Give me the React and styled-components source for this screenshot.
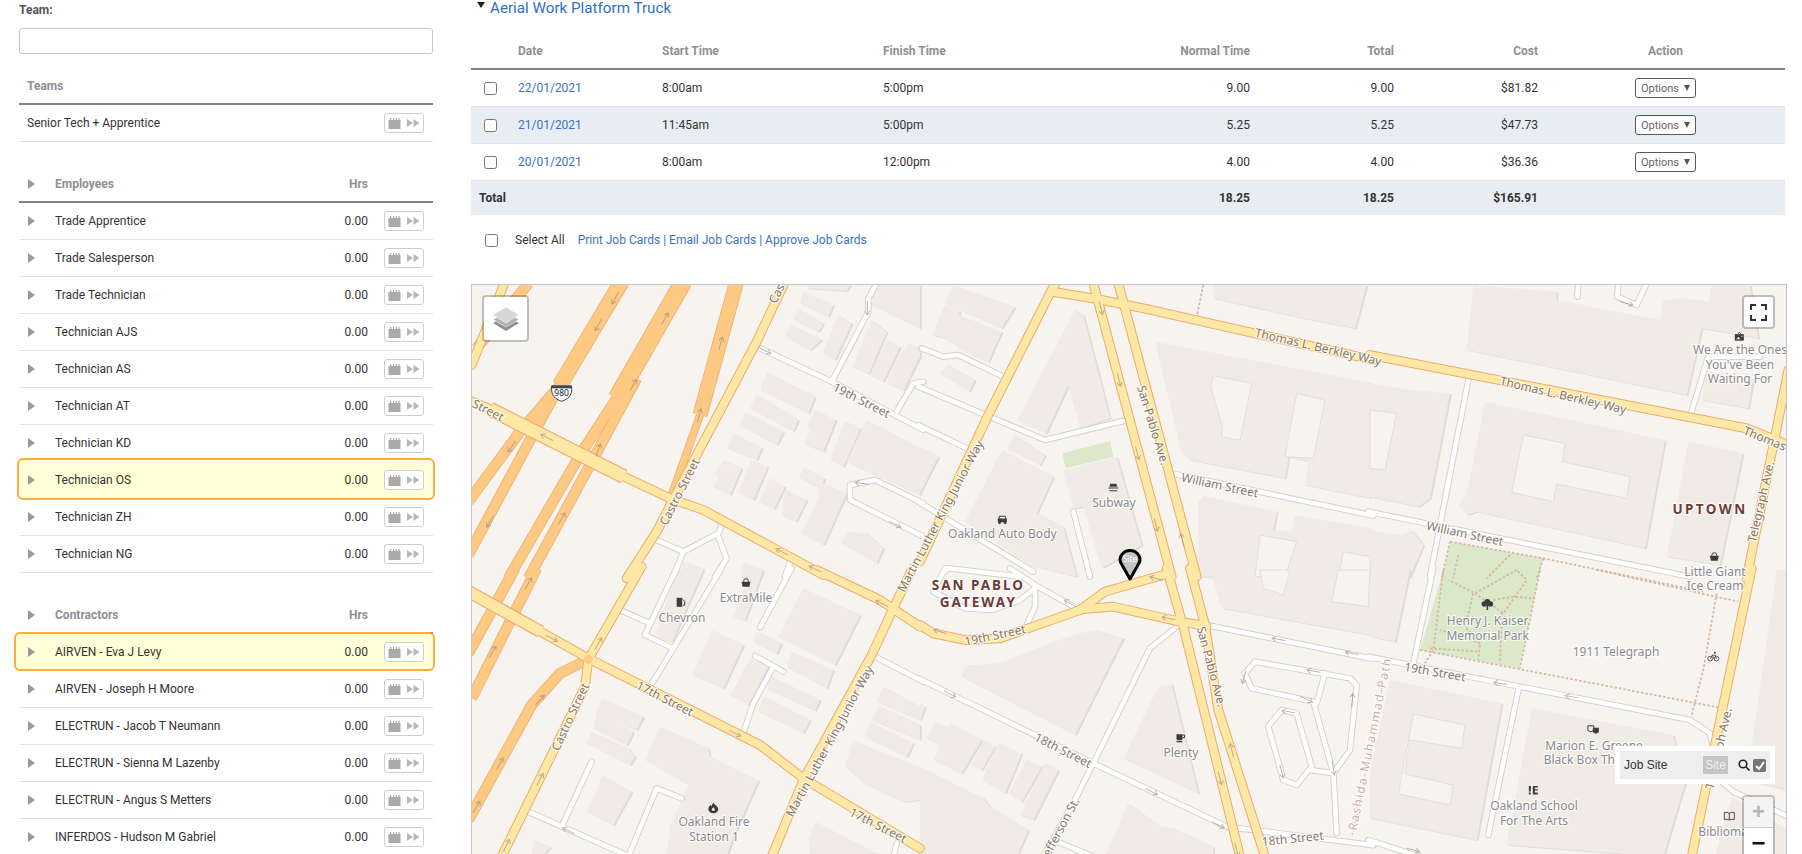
import React from 'react';
import styled, { createGlobalStyle } from 'styled-components';

const Global = createGlobalStyle`
  html, body { margin: 0; padding: 0; height: 854px; overflow: hidden; background: #fff; }
  body { font-family: Roboto, "Liberation Sans", sans-serif; font-size: 12px; color: #333; }
`;

const Page = styled.div`display: flex; height: 854px; overflow: hidden;`;
const Sidebar = styled.aside`width: 414px; margin-left: 19px; flex: none;`;
const FieldLabel = styled.label`display: block; height: 20px; line-height: 20px; font-weight: 700; color: #555; margin-bottom: 8px;`;
const TeamInput = styled.input`display: block; box-sizing: border-box; width: 414px; height: 26px; border: 1px solid #c6c6c6; border-radius: 3px; background: #fff;`;
const Section = styled.section`margin-top: ${p => p.$first ? 13 : 23}px;`;
const SectionHead = styled.div`
  display: grid; grid-template-columns: ${p => p.$plain ? '1fr' : '27px 1fr auto'};
  align-items: center; box-sizing: content-box; height: 34px; padding: 2px 65px 0 ${p => p.$plain ? 8 : 9}px;
  border-bottom: 2px solid #808488; font-weight: 700; color: #8d9094;
`;
const Row = styled.div`
  position: relative; z-index: ${p => p.$mark ? 1 : 'auto'};
  display: grid; grid-template-columns: ${p => p.$plain ? '1fr 40px' : '27px 1fr auto 40px'};
  column-gap: 0; align-items: center; box-sizing: border-box; height: 37px;
  padding: 0 9px 0 ${p => p.$plain ? 8 : 9}px; border-bottom: 1px solid #e2e3e4;
  ${p => p.$mark && `&::before {
    content: ""; position: absolute; box-sizing: border-box;
    top: ${p.$mark === 'wide' ? -2 : -4}px; bottom: ${p.$mark === 'wide' ? -1 : -2}px;
    left: ${p.$mark === 'wide' ? -5 : -2}px; right: -2px;
    background: #ffffd8; border: 2px solid #fbae40; border-radius: 6px;
  }
  & > * { position: relative; }`}
`;
const Name = styled.span`white-space: nowrap;`;
const Hours = styled.span`margin-right: 16px; text-align: right;`;
const CaretIcon = styled.svg`display: block; width: 7px; height: 10px; fill: #9a9a9a;`;
const AssignButton = styled.button`
  display: flex; align-items: center; justify-content: center; box-sizing: border-box; width: 40px; height: 20px;
  padding: 0; background: #fff; border: 1px solid #cfcfcf; border-radius: 3px;
`;
const Caret = () => <CaretIcon viewBox="0 0 7 10"><path d="M0 0 L7 5 L0 10 Z" /></CaretIcon>;
const AssignIcon = () => (
  <svg width="32" height="12" viewBox="0 0 32 12" fill="#aaa">
    <path d="M0.5 3 H12.5 V12 H0.5 Z M2 1 h1.2 v2.5 H2 Z M5 1 h1.2 v2.5 H5 Z M7.8 1 h1.2 v2.5 H7.8 Z M10.4 1 h1.2 v2.5 h-1.2 Z" />
    <path d="M19 2 L25 6 L19 10 Z M25.5 2 L31.5 6 L25.5 10 Z" opacity=".85" />
  </svg>
);

const Person = ({ name, mark }) => (
  <Row $mark={mark}>
    <Caret />
    <Name>{name}</Name>
    <Hours>0.00</Hours>
    <AssignButton><AssignIcon /></AssignButton>
  </Row>
);

const Main = styled.main`width: 1316px; margin-left: 38px; flex: none;`;
const Title = styled.h2`
  display: flex; align-items: flex-start; gap: 5px; box-sizing: border-box; height: 34px; margin: 0 0 0 6px; padding-top: 1px; font-size: 15.2px; font-weight: 400; line-height: 15px; color: #2f6fc7;
`;
const DownCaret = styled.i`
  display: block; width: 0; height: 0; margin-top: 1px; border-left: 4px solid transparent; border-right: 4px solid transparent; border-top: 6px solid #222;
`;
const Cols = `grid-template-columns: 47px 144px 221px 223px 144px 144px 144px 1fr;`;
const HeadRow = styled.div`
  display: grid; ${Cols} align-items: center; width: 1314px; height: 34px; border-bottom: 2px solid #808488; font-weight: 700; color: #8d9094;
`;
const DataRow = styled.div`
  display: grid; ${Cols} align-items: center; box-sizing: border-box; width: 1314px; height: 37px;
  border-bottom: 1px solid #e2e3e4; background: ${p => p.$alt ? '#e8edf4' : '#fff'};
`;
const TotalRow = styled.div`
  display: grid; ${Cols} align-items: center; width: 1314px; height: 34px; background: #e8edf4; font-weight: 700; color: #333;
`;
const Right = styled.span`text-align: right;`;
const Center = styled.span`display: flex; justify-content: center; padding-left: 8px;`;
const Check = styled.input.attrs({ type: 'checkbox' })`margin: 0 0 0 13px; width: 13px; height: 13px;`;
const TotalLabel = styled.span`padding-left: 8px;`;
const TextLink = styled.a`color: #3b70c4; text-decoration: none;`;
const OptionsButton = styled.button`
  display: flex; align-items: center; gap: 5px; box-sizing: border-box; width: 61px; height: 20px; padding: 0 0 0 5px;
  background: #fff; border: 1px solid #55595e; border-radius: 3px; font: 400 11px Roboto, sans-serif; color: #666;
`;
const OptionsCaret = styled.i`width: 0; height: 0; border-left: 3px solid transparent; border-right: 3px solid transparent; border-top: 6px solid #555;`;
const Footer = styled.div`display: flex; align-items: center; height: 50px; margin-top: 0; padding-left: 14px;`;
const FooterCheck = styled.input.attrs({ type: 'checkbox' })`margin: 0 17px 0 0; width: 13px; height: 13px;`;
const SelectLabel = styled.span`margin-right: 13px;`;
const Sep = styled.span`color: #3b70c4;`;

const MapBox = styled.div`
  position: relative; box-sizing: border-box; width: 1316px; height: 572px; margin-top: 19px;
  border: 1px solid #c4c4c4; border-bottom: 0; overflow: hidden; background: #f7f4f0;
`;
const MapSvg = styled.svg`display: block; width: 1314px; height: 571px;`;
const Label = styled.text`
  font-family: "Noto Sans", "Open Sans", sans-serif; font-size: ${p => p.$size || 12}px;
  font-weight: ${p => p.$weight || 400}; letter-spacing: ${p => p.$track || 0}px; fill: ${p => p.$color || '#8a8a8e'};
  text-anchor: ${p => p.$anchor || 'middle'}; dominant-baseline: central;
  paint-order: stroke; stroke: rgba(255,255,255,.75); stroke-width: 2.4px; stroke-linejoin: round;
`;
const ControlTile = styled.div`
  position: absolute; box-sizing: border-box; display: flex; align-items: center; justify-content: center;
  background: #fff; border: 2px solid rgba(0,0,0,.22); border-radius: 4px; background-clip: padding-box;
`;
const LayersTile = styled(ControlTile)`left: 10px; top: 10px; width: 47px; height: 47px;`;
const FullTile = styled(ControlTile)`right: 11px; top: 10px; width: 33px; height: 34px;`;
const ZoomTile = styled(ControlTile)`right: 11px; top: 510px; width: 33px; height: 70px; flex-direction: column; justify-content: flex-start; overflow: hidden;`;
const ZoomIn = styled.div`display: flex; align-items: center; justify-content: center; width: 100%; height: 30px; background: #f4f4f4; color: #b5b5b5; border-bottom: 1px solid #ccc; font: 700 22px "Liberation Sans", sans-serif;`;
const ZoomOut = styled.div`display: flex; align-items: center; justify-content: center; width: 100%; height: 30px; color: #111; font: 700 24px "Liberation Sans", sans-serif;`;
const LegendBox = styled.div`
  position: absolute; right: 11px; top: 461px; box-sizing: border-box; width: 160px; height: 38px; padding: 5px; background: #fff;
`;
const LegendInner = styled.div`
  display: flex; align-items: center; height: 28px; padding-left: 4px; background: #eee; font: 12px "Liberation Sans", sans-serif; color: #333;
`;
const LegendName = styled.span`width: 79px;`;
const LegendBadge = styled.span`
  display: block; width: 25px; height: 18px; line-height: 18px; text-align: center; background: #c4c4c4; color: #f0f0f0; margin-right: 10px;
`;
const LegendCheck = styled.span`
  display: flex; align-items: center; justify-content: center; width: 13px; height: 13px; margin-left: 3px; background: #757575; border-radius: 2px;
`;

const O = { a: [470, 285], b: [470, 570], c: [920, 285], d: [920, 570], e: [1370, 285], f: [1370, 570] };
const pt = (p, x, y) => [O[p][0] + x / 3, O[p][1] + y / 3];
const pts = (p, s) => s.trim().split(/\s+/).map(t => { const [x, y] = t.split(',').map(Number); return pt(p, x, y).join(','); }).join(' ');

const buildings = {
  a: ['890,262 1035,335 1015,385 870,315', '860,328 985,405 970,438 840,370', '825,382 940,440 920,480 808,420', '790,445 875,490 860,525 772,490', '845,525 893,545 850,645 805,622', '760,525 815,550 780,630 730,605 745,575 735,565', '900,580 945,605 912,672 868,650', '945,615 1010,645 978,710 935,690', '1000,547 1065,580 1050,612 985,575', '1055,595 1130,625 1060,780 995,745 1050,630 1040,625', '1035,375 1097,405 1060,500 1005,478 1020,435 1012,425', '1125,408 1172,430 1120,545 1080,525', '1190,405 1350,490 1350,630 1215,570 1130,530', '985,72 1060,115 1045,140 970,105', '1000,20 1090,60 1075,95 990,55', '1015,0 1140,0 1130,18 1010,10', '960,118 1055,165 1020,195 945,155', '1105,90 1145,115 1095,225 1058,205', '1205,105 1250,140 1195,268 1148,245', '1250,165 1290,185 1240,290 1200,270', '1320,175 1350,190 1350,215 1300,315 1250,295 1280,220', '1210,0 1350,0 1350,130 1205,60', '1130,740 1190,745 1240,790 1220,835 1115,775', '820,830 880,855 870,875 810,875', '640,830 700,850 690,875 630,875'],
  b: ['1000,55 1170,135 1095,285 925,200', '725,180 820,225 760,355 668,315', '840,265 895,290 835,405 782,375', '860,185 935,220 920,252 850,215', '965,245 1090,300 1070,355 950,290', '905,320 1050,390 1035,422 890,355', '880,378 1020,450 1000,488 865,425', '395,385 520,440 500,480 375,430', '380,430 490,485 470,525 370,475', '365,485 475,535 495,560 480,585 350,520', '570,470 715,535 720,560 865,632 790,800 770,860 590,860 600,770 655,645 525,570', '395,615 485,665 430,765 350,725 380,660', '790,140 840,0 880,0 825,150', '555,200 620,0 700,0 605,215', '1240,350 1350,410 1350,450 1220,395', '1225,405 1350,465 1350,510 1205,450', '1200,455 1330,520 1310,560 1185,500', '1150,510 1215,540 1350,590 1350,690 1300,695 1180,640 1125,590', '1035,755 1220,850 1020,860 1015,810', '190,810 240,830 220,860 185,860'],
  c: ['100,0 285,65 245,130 75,55', '75,60 120,80 115,90 205,125 245,140 205,230 165,215 120,190 75,160 35,150', '465,75 490,90 570,400 480,430 445,300 378,445 292,405', '60,265 85,240 165,285 148,320', '285,450 375,510 360,540 260,490', '245,495 400,575 350,685 430,725 470,875 330,840 135,710', '430,555 590,515 665,780 545,850 490,665 460,670', '0,485 55,515 0,625', '880,0 1340,0 1305,130 1150,100 880,40', '705,170 1350,292 1350,640 1155,600 1165,530 1105,515 1095,580 810,525 785,505', '835,650 850,632 1070,680 1060,735 1115,740 1125,690 1350,730 1350,875 835,875'],
  d: ['870,0 1350,0 1350,195 905,115', '125,320 135,285 170,285 250,275 400,215 480,190 530,180 610,205 465,495', '715,350 755,342 835,670 610,565', '45,455 85,470 60,525 20,505', '90,460 185,510 125,610 40,570', '190,510 225,530 185,600 155,585', '235,520 305,550 255,670 185,630', '320,570 365,590 305,695 265,670', '375,580 415,600 340,750 300,735', '0,590 190,685 210,710 325,780 290,860 0,860', '0,400 15,410 0,450', '625,700 720,770 760,775 880,830 880,860 555,860'],
  e: ['310,0 560,20 560,45 870,105 880,45 945,40 1015,50 1025,0 1140,0 1165,160 995,130 950,330 290,195', '0,295 125,315 240,325 180,640 145,665 0,635', '345,350 885,465 825,790 320,680 290,690 265,660 290,630', '955,470 1118,505 1050,840 890,815', '1010,260 1150,280 1135,370 995,345', '0,735 90,750 125,735 160,780 120,875 0,875'],
  f: ['0,0 120,0 75,215 0,200', '60,330 395,400 320,810 0,745 0,600', '485,415 910,495 945,640 880,860 410,825', '1220,0 1250,0 1250,660 1130,630', '1085,680 1250,780 1250,860 1035,860'],
};
const courts = {
  c: ['880,272 995,295 960,465 905,455 908,430 872,305', '1130,325 1215,345 1180,520 1095,515', '1020,750 1130,770 1095,875 1005,875', '1270,800 1350,815 1350,875 1255,875'],
  d: ['1020,0 1110,0 1090,75 1030,55', '1255,0 1350,0 1345,110 1235,95'],
  e: ['0,375 80,385 45,555 0,550', '460,450 585,475 578,530 780,575 770,640 560,597 550,650 425,622'],
  f: ['130,432 285,465 275,535 120,510 105,612 250,645 240,705 85,672'],
};
const whiteRoads = [
  ['a', '860,185 1085,290 1360,435'], ['a', '1085,290 1195,80 1195,40 1220,-5'], ['a', '1360,290 1330,295 1280,380'],
  ['a', '1140,600 1215,585 1360,655'], ['a', '1140,600 1140,645 1360,755'], ['a', '560,765 640,800 745,745 755,720'],
  ['a', '640,800 610,875'], ['a', '745,755 770,820 735,875'], ['a', '960,830 945,875'],
  ['b', '620,-5 525,195 610,235 755,-5'], ['b', '610,235 540,350'], ['b', '450,120 540,160'], ['b', '965,-5 870,172'],
  ['b', '855,258 940,305'], ['b', '910,290 850,400 820,490'], ['b', '1215,260 1360,335'], ['b', '365,575 275,770'],
  ['b', '175,725 480,860'], ['b', '635,685 560,655 475,860'], ['b', '1280,820 1270,860'],
  ['c', '5,190 70,215 115,210 250,275'], ['c', '-5,305 375,465 610,408'], ['c', '-5,420 140,490'], ['c', '-5,650 340,860'],
  ['c', '460,680 510,875'], ['c', '75,860 85,850 300,875'], ['c', '755,565 1360,692'],
  ['d', '75,-5 40,65 135,115 215,120 300,90 345,55'], ['d', '270,-5 345,45 345,110 320,165'], ['d', '345,45 470,115'],
  ['d', '-5,325 520,580 920,770 1360,826'], ['d', '770,170 690,235 520,580 460,700 370,860'], ['d', '860,165 1360,267'], ['d', '400,810 520,860'],
  ['d', '975,310 1005,275 1290,325 1310,345 1290,540 1240,610 1170,600'], ['d', '975,310 995,355 1180,395 1240,610 1250,790'], ['d', '1215,310 1190,400'],
  ['d', '1060,450 1085,420 1130,430 1175,590 1130,645 1090,630 1045,470 1060,450'],
  ['e', '295,285 180,875'], ['e', '-5,680 960,875'], ['e', '1170,215 1015,215 960,395'], ['e', '625,-5 622,35'], ['e', '745,-5 742,35 800,60 830,-5'],
  ['f', '190,-5 130,280'], ['f', '445,360 355,795'], ['f', '-5,810 150,860'], ['f', '-5,260 450,350 960,450 1020,490 1030,530'], ['f', '1060,640 1090,665 1255,740'],
];
const motorways = [
  ['a', '455,-10 270,300', 16], ['a', '270,300 150,440 -5,650', 11], ['a', '270,300 215,400 -5,810', 11],
  ['a', '640,-10 440,340', 18], ['a', '440,340 330,510 115,880', 11], ['a', '500,280 360,540 175,880', 11],
  ['a', '800,-10 690,390', 15], ['a', '690,390 605,630', 8], ['a', '175,-5 20,190', 11],
  ['b', '135,-5 50,150 -5,250', 11], ['b', '200,-5 5,385', 11], ['b', '355,268 270,310 185,405 -5,750', 11],
];
const yellow = [
  ['a', '-5,345 60,372', 9.8], ['a', '462,575 600,640 700,675 1060,870', 9.8], ['a', '945,-10 860,170 680,510 560,740 470,880', 9.8], ['a', '105,-10 5,240', 9.8],
  ['b', '212,185 360,268 870,525 1000,625 1350,835', 9.8], ['b', '515,-10 355,268 345,350 95,860', 9.8], ['b', '1325,0 1270,115 1205,255 1000,630 905,860', 9.8], ['b', '1040,0 1230,90 1350,170', 9.8],
  ['c', '410,-10 395,15 200,400 0,830', 9.8], ['c', '395,20 520,40 680,72 1360,225', 9.8], ['c', '520,-5 755,875', 9.8], ['c', '595,-5 830,875', 9.8],
  ['d', '0,165 40,190 135,210 240,205 480,120', 9.8], ['d', '480,120 555,65 745,10', 9.8], ['d', '480,118 580,110 780,155 860,168', 9.8],
  ['d', '740,-5 790,170 960,860', 9.8], ['d', '810,-5 855,165 895,420 1035,860', 9.8],
  ['e', '0,210 1130,430 1255,480', 9.8], ['e', '1255,255 1130,880', 9.8], ['f', '1145,-5 965,860', 9.8],
];
const thick = [['a', '60,372 462,575', 15], ['b', '-5,64 212,185', 13]];
const dotted = [
  ['e', '240,770 520,820 1000,920'], ['e', '240,770 215,880'], ['e', '520,820 500,880'], ['e', '265,810 250,880'], ['e', '420,810 350,880'],
  ['f', '220,0 190,240 165,280'], ['f', '510,0 450,295'], ['f', '150,240 1045,412'], ['f', '680,0 1105,95'], ['f', '1040,70 1000,300 965,435'],
  ['f', '440,0 315,70 235,30'], ['f', '315,70 400,130 470,30 440,0'], ['f', '370,90 430,80 495,85'], ['f', '330,220 210,180'], ['f', '310,70 285,170 330,220 325,270'], ['f', '395,130 390,280'], ['f', '180,235 330,245'],
  ['c', '850,0 830,95'],
];
const arrows = [
  ['a', 435, 40, 120], ['a', 385, 120, 120], ['a', 585, 100, -60], ['a', 490, 300, -60], ['a', 752, 175, -75], ['a', 688, 390, -75], ['a', 385, 495, -70], ['a', 275, 700, -60], ['a', 125, 485, 125], ['a', 60, 710, 120], ['a', 230, 457, 207], ['a', 935, 800, 207], ['a', 1035, 852, 207], ['a', 1275, 718, 27], ['a', 1175, 595, 187], ['a', 885, 197, 27], ['a', 1192, 70, 90],
  ['b', 175, 40, -60], ['b', 68, 245, -60], ['b', 245, 205, 27], ['b', 385, 220, -60], ['b', 210, 390, -50], ['b', 90, 580, -60], ['b', 20, 710, -60], ['b', 210, 628, -62], ['b', 110, 825, -62], ['b', 795, 490, 27], ['b', 1235, 100, 207], ['b', 295, 782, 207],
  ['c', 543, 70, 75], ['c', 597, 285, 75], ['c', 652, 505, 75], ['c', 708, 720, 75], ['c', 787, 765, -105],
  ['d', 60, 185, 195], ['d', 450, 100, 210], ['d', 745, 145, 190], ['d', 708, 25, 195], ['d', 1075, 208, 190], ['d', 1295, 250, 190], ['d', 90, 372, 27], ['d', 695, 665, 27], ['d', 895, 765, 27], ['d', 935, 540, -105], ['d', 900, 625, 75], ['d', 950, 840, 75], ['d', 1180, 303, 190], ['d', 1085, 605, 75], ['d', 1297, 390, -85], ['d', 1160, 388, 25], ['d', 972, 322, 105], ['d', 1105, 425, 190], ['d', 1240, 595, 80],
  ['e', 770, 55, 15],
  ['f', 390, 340, 190], ['f', 605, 380, 190], ['f', 130, 840, 15],
];
const streets = [
  ['a', 55, 375, 27, 'Street'], ['a', 628, 620, -63, 'Castro Street'], ['a', 1175, 345, 27, '19th Street'],
  ['b', 300, 440, -65, 'Castro Street'], ['b', 585, 385, 27, '17th Street'], ['b', 1225, 765, 27, '17th Street'],
  ['c', 60, 693, -62, 'Martin Luther King Junior Way'], ['b', 1078, 513, -61.5, 'Martin Luther King Junior Way'],
  ['c', 700, 420, 73, 'San Pablo Ave.'], ['d', 875, 290, 75, 'San Pablo Ave.'], ['c', 1195, 185, 13, 'Thomas L. Berkley Way'],
  ['e', 580, 330, 13, 'Thomas L. Berkley Way'], ['c', 900, 600, 12, 'William Street'], ['e', 285, 745, 12, 'William Street'],
  ['d', 225, 195, -12, '19th Street'], ['f', 195, 305, 10, '19th Street'], ['d', 430, 540, 27, '18th Street'], ['d', 1118, 805, -6, '18th Street'],
  ['d', 420, 775, -62, 'Jefferson St.'], ['e', 1172, 650, -77, 'Telegraph Ave.'], ['f', 1045, 535, -77, 'Telegraph Ave.'], ['e', 1185, 460, 22, 'Thomas'],
];
const pois = [
  ['e', 1110, 194, 'We Are the Ones'], ['e', 1110, 237, "You've Been"], ['e', 1110, 280, 'Waiting For'],
  ['c', 582, 653, 'Subway'], ['c', 247, 746, 'Oakland Auto Body'], ['b', 828, 83, 'ExtraMile'], ['b', 636, 143, 'Chevron'],
  ['b', 732, 755, 'Oakland Fire'], ['b', 732, 798, 'Station 1'], ['d', 783, 548, 'Plenty'], ['f', 1035, 5, 'Little Giant'], ['f', 1035, 47, 'Ice Cream'],
  ['f', 353, 152, 'Henry J. Kaiser'], ['f', 353, 195, 'Memorial Park'], ['f', 738, 245, '1911 Telegraph'], ['f', 672, 525, 'Marion E. Greene'], ['f', 672, 567, 'Black Box Theatre'],
  ['f', 492, 707, 'Oakland School'], ['f', 492, 750, 'For The Arts'], ['f', 985, 785, 'Bibliomania'],
];
const glyphs = {
  basket: <><path d="M-4.5 -1 H4.5 L3.4 4 H-3.4 Z" /><path d="M-2.5 -1 A2.5 3 0 0 1 2.5 -1" fill="none" stroke="#3c3c3c" /></>,
  gas: <><path d="M-4 -4.5 H1.5 V4.5 H-4 Z" /><path d="M2 -3 L4 -1 V3 H2.5" fill="none" stroke="#3c3c3c" /></>,
  car: <><path d="M-4.5 0 L-3 -3.5 H3 L4.5 0 V3 H-4.5 Z" /><path d="M-2.4 -2.6 H2.4 L3 -.8 H-3 Z" fill="#f7f4f0" /><circle cx="-2.8" cy="3.5" r="1.4" /><circle cx="2.8" cy="3.5" r="1.4" /></>,
  subway: <><path d="M-5 .2 H5 V1.2 H-5 Z M-4 3 H4 V4 H-4 Z" /><path d="M-4 -.6 L-3 -3.5 H3 L4 -.6 Z" /></>,
  coffee: <><path d="M-3.5 -3.5 H2.5 V1 Q2.5 2.5 1 2.5 H-2 Q-3.5 2.5 -3.5 1 Z M-3.5 3.3 H2.5 V4.5 H-3.5 Z" /><path d="M2.5 -2.5 H4.5 V0 H2.5" fill="none" stroke="#3c3c3c" /></>,
  tree: <><circle cx="-3" cy="-1" r="2.8" /><circle cx="0" cy="-3" r="3" /><circle cx="3" cy="-1" r="2.8" /><path d="M-.8 -1 H.8 V5 H-.8 Z" /></>,
  bike: <><circle cx="-3.2" cy="2" r="2.3" fill="none" stroke="#3c3c3c" strokeWidth=".8" /><circle cx="3.2" cy="2" r="2.3" fill="none" stroke="#3c3c3c" strokeWidth=".8" /><path d="M-3 2 L-1 -1.5 H2 L3 2 M-1 -1.5 L.5 2" fill="none" stroke="#3c3c3c" strokeWidth=".8" /><circle cx="1.5" cy="-3.8" r="1" /></>,
  masks: <><path d="M-5.5 -3.5 H0.5 V1 L-2.5 2.5 L-5.5 1 Z" fill="#f1ebe5" stroke="#3c3c3c" /><path d="M-.5 -1.5 H5.5 V3 L2.5 4.5 L-.5 3 Z" /></>,
  school: <path d="M-4.5 -4 H-2.5 V1.5 H-4.5 Z M-4.5 2.5 H-2.5 V4.5 H-4.5 Z M-.5 -4 H4.5 V-2.6 H1.5 V-.8 H4.5 V.6 H1.5 V2.4 H4.5 V4.5 H-.5 Z" />,
  gallery: <><path d="M-4.5 -2.5 H4.5 V4 H-4.5 Z" /><path d="M-3 2.5 L-1 0 L1 2.5 Z M2 -1 h1.2 v1.2 h-1.2 Z" fill="#f7f4f0" /><path d="M-1.5 -2.5 L0 -4.5 L1.5 -2.5" fill="none" stroke="#3c3c3c" strokeWidth=".8" /></>,
  book: <path d="M-5 -3.5 Q-2 -4.2 0 -2.8 Q2 -4.2 5 -3.5 V3.5 Q2 2.8 0 4 Q-2 2.8 -5 3.5 Z M0 -2.8 V4" fill="#f1ebe5" stroke="#3c3c3c" strokeWidth=".9" />,
  fire: <path d="M0 -5 C1 -3 4.5 -2 5 1.5 A5 4 0 0 1 -5 1.5 C-5 -.5 -3.5 -1.5 -3 -2.8 L-1.5 -1.5 C-1.5 -3 -.8 -4 0 -5 Z M0 -.5 C-1.5 1 -2 2.2 -1 3.2 H1 C2 2.2 1.5 1 0 -.5 Z" fillRule="evenodd" />,
};
const icons = [
  ['e', 1108, 155, 'gallery'], ['c', 580, 607, 'subway'], ['c', 247, 703, 'car'], ['b', 828, 38, 'basket'], ['b', 632, 97, 'gas'], ['b', 730, 713, 'fire'],
  ['d', 780, 503, 'coffee'], ['e', 1033, 815, 'basket'], ['f', 352, 105, 'tree'], ['f', 1030, 260, 'bike'], ['f', 670, 478, 'masks'], ['f', 490, 660, 'school'], ['f', 1078, 738, 'book'],
];
const line = (p, d, stroke, w, key, extra = {}) => (
  <polyline key={key} points={pts(p, d)} fill="none" stroke={stroke} strokeWidth={w} strokeLinejoin="round" strokeLinecap="round" {...extra} />
);

const StreetMap = () => (
  <MapSvg viewBox="472 285 1314 571">
    <rect x="472" y="285" width="1314" height="571" fill="#f7f4f0" />
    <polygon points={pts('f', '220,0 510,0 450,295 150,240')} fill="#dbe8c9" />
    <polygon points={pts('e', '240,770 520,820 505,875 220,875')} fill="#dbe8c9" />
    <polygon points={pts('c', '427,505 570,468 580,515 437,550')} fill="#dbe8c9" />
    {Object.entries(buildings).flatMap(([p, list]) => list.map((s, i) => (
      <g key={p + i}>
        <polygon points={pts(p, s)} fill="#dfdcd7" transform="translate(1.8 1)" />
        <polygon points={pts(p, s)} fill="#f1ebe5" />
      </g>
    )))}
    {Object.entries(courts).flatMap(([p, list]) => list.map((s, i) => (
      <polygon key={p + 'c' + i} points={pts(p, s)} fill="#f7f4f0" stroke="#e2dfda" strokeWidth="1" />
    )))}
    {dotted.map(([p, d], i) => line(p, d, '#d6b9a4', 1.8, 'dot' + i, { strokeDasharray: '2.5 2', strokeLinecap: 'butt' }))}
    <polyline points={pts('d', '1296,795 1350,560') + ' ' + pts('f', '40,320 50,290')} fill="none" stroke="#d6b9a4" strokeWidth="1" strokeDasharray="2 2" />
    {whiteRoads.map(([p, d], i) => line(p, d, '#d4d1cd', 6.5, 'wc' + i))}
    {whiteRoads.map(([p, d], i) => line(p, d, '#fff', 4.6, 'wf' + i))}
    {motorways.map(([p, d, w], i) => line(p, d, '#eeae70', w, 'mc' + i, { strokeLinecap: 'butt' }))}
    {motorways.map(([p, d, w], i) => line(p, d, '#fdc983', w - 1.6, 'mf' + i, { strokeLinecap: 'butt' }))}
    {yellow.map(([p, d, w], i) => line(p, d, '#eeab6c', w, 'yc' + i))}
    {thick.map(([p, d, w], i) => line(p, d, '#eeab6c', w, 'tc' + i, { strokeLinecap: 'butt' }))}
    {yellow.map(([p, d, w], i) => line(p, d, '#fee8a6', w - 2, 'yf' + i))}
    {thick.map(([p, d, w], i) => line(p, d, '#fee8a6', w - 2.4, 'tf' + i, { strokeLinecap: 'butt' }))}
    <circle cx={pt('b', 355, 268)[0]} cy={pt('b', 355, 268)[1]} r="4.5" fill="#fdc983" />
    {arrows.map(([p, x, y, a], i) => {
      const [px, py] = pt(p, x, y);
      return <path key={'ar' + i} transform={`translate(${px} ${py}) rotate(${a})`} d="M-7 0 H6 M2.5 -2.6 L6.5 0 L2.5 2.6" fill="none" stroke="#8f8a7c" strokeOpacity=".6" strokeWidth="1" />;
    })}
    {streets.map(([p, x, y, a, t], i) => {
      const [px, py] = pt(p, x, y);
      return <Label key={'st' + i} x={px} y={py} transform={`rotate(${a} ${px} ${py})`} $color="#84776b">{t}</Label>;
    })}
    <Label x={pt('a', 905, 52)[0]} y={pt('a', 905, 52)[1]} transform={`rotate(-62 ${pt('a', 905, 52)[0]} ${pt('a', 905, 52)[1]})`} $anchor="start" $color="#84776b">Castro Street</Label>
    <Label x="1352" y="830" transform="rotate(-78.5 1352 830)" $anchor="start" $track={1.4} $color="#c9b5a3">Rashida-Muhammad-Path</Label>
    {pois.map(([p, x, y, t], i) => {
      const [px, py] = pt(p, x, y);
      return <Label key={'po' + i} x={px} y={py} $anchor={t === 'Bibliomania' ? 'start' : 'middle'}>{t}</Label>;
    })}
    {icons.map(([p, x, y, k], i) => {
      const [px, py] = pt(p, x, y);
      return <g key={'ic' + i} transform={`translate(${px} ${py})`} fill="#3c3c3c">{glyphs[k]}</g>;
    })}
    <Label x={pt('d', 175, 45)[0]} y={pt('d', 175, 45)[1]} $size={13.5} $weight={700} $track={2} $color="#6e3b3b">SAN PABLO</Label>
    <Label x={pt('d', 175, 95)[0]} y={pt('d', 175, 95)[1]} $size={13.5} $weight={700} $track={2} $color="#6e3b3b">GATEWAY</Label>
    <Label x={pt('e', 1020, 672)[0]} y={pt('e', 1020, 672)[1]} $size={13.5} $weight={700} $track={2.4} $color="#6e3b3b">UPTOWN</Label>
    <g transform={`translate(${pt('a', 275, 325)[0]} ${pt('a', 275, 325)[1]})`}>
      <path d="M-10 -7.5 H10 Q11 1 6 5 Q2 7.5 0 8 Q-2 7.5 -6 5 Q-11 1 -10 -7.5 Z" fill="#fff" stroke="#3a4560" strokeWidth="1" />
      <path d="M-10 -7.5 H10 V-5 H-10 Z" fill="#3a4560" />
      <text x="0" y="3" textAnchor="middle" fontFamily="Noto Sans, sans-serif" fontSize="8.5" fill="#222">980</text>
    </g>
    <g transform={`translate(${pt('c', 630, 828)[0]} ${pt('c', 630, 828)[1]})`}>
      <path d="M0 18 L-8.5 3 A10 9.5 0 0 1 -10 -1 A10 9.5 0 0 1 10 -1 A10 9.5 0 0 1 8.5 3 Z" fill="#c6c6c6" stroke="#000" strokeWidth="3" strokeLinejoin="round" />
      <text x="0" y="1" textAnchor="middle" fontFamily="Noto Sans, sans-serif" fontSize="8" fill="#fff">Site</text>
    </g>
  </MapSvg>
);

const LayersIcon = () => (
  <svg width="28" height="28" viewBox="0 0 28 28">
    <path d="M1 18 L14 11 L27 18 L14 26 Z" fill="#8f8f8f" />
    <path d="M1 14.5 L14 7.5 L27 14.5 L14 22 Z" fill="#b0b0b0" stroke="#fff" strokeWidth=".6" />
    <path d="M1 10 L14 2 L27 10 L14 18 Z" fill="#d6d6d6" stroke="#fff" strokeWidth=".6" />
  </svg>
);
const FullIcon = () => (
  <svg width="17" height="17" viewBox="0 0 17 17" fill="none" stroke="#333" strokeWidth="2">
    <path d="M1 6 V1 H6 M11 1 H16 V6 M16 11 V16 H11 M6 16 H1 V11" />
  </svg>
);

const team = ['Trade Apprentice', 'Trade Salesperson', 'Trade Technician', 'Technician AJS', 'Technician AS', 'Technician AT', 'Technician KD', 'Technician OS', 'Technician ZH', 'Technician NG'];
const contractors = ['AIRVEN - Eva J Levy', 'AIRVEN - Joseph H Moore', 'ELECTRUN - Jacob T Neumann', 'ELECTRUN - Sienna M Lazenby', 'ELECTRUN - Angus S Metters', 'INFERDOS - Hudson M Gabriel'];
const jobs = [
  ['22/01/2021', '8:00am', '5:00pm', '9.00', '9.00', '$81.82'],
  ['21/01/2021', '11:45am', '5:00pm', '5.25', '5.25', '$47.73'],
  ['20/01/2021', '8:00am', '12:00pm', '4.00', '4.00', '$36.36'],
];

export default function App() {
  return (
    <Page>
      <Global />
      <Sidebar>
        <FieldLabel>Team:</FieldLabel>
        <TeamInput />
        <Section $first>
          <SectionHead $plain>Teams</SectionHead>
          <Row $plain>
            <Name>Senior Tech + Apprentice</Name>
            <AssignButton><AssignIcon /></AssignButton>
          </Row>
        </Section>
        <Section>
          <SectionHead><Caret /><span>Employees</span><span>Hrs</span></SectionHead>
          {team.map(n => <Person key={n} name={n} mark={n === 'Technician OS' ? 'normal' : undefined} />)}
        </Section>
        <Section>
          <SectionHead><Caret /><span>Contractors</span><span>Hrs</span></SectionHead>
          {contractors.map((n, i) => <Person key={n} name={n} mark={i === 0 ? 'wide' : undefined} />)}
        </Section>
      </Sidebar>
      <Main>
        <Title><DownCaret />Aerial Work Platform Truck</Title>
        <HeadRow>
          <span /><span>Date</span><span>Start Time</span><span>Finish Time</span>
          <Right>Normal Time</Right><Right>Total</Right><Right>Cost</Right><Center>Action</Center>
        </HeadRow>
        {jobs.map((j, i) => (
          <DataRow key={j[0]} $alt={i === 1}>
            <Check />
            <TextLink>{j[0]}</TextLink><span>{j[1]}</span><span>{j[2]}</span>
            <Right>{j[3]}</Right><Right>{j[4]}</Right><Right>{j[5]}</Right>
            <Center><OptionsButton>Options<OptionsCaret /></OptionsButton></Center>
          </DataRow>
        ))}
        <TotalRow>
          <TotalLabel>Total</TotalLabel><span /><span /><span />
          <Right>18.25</Right><Right>18.25</Right><Right>$165.91</Right><span />
        </TotalRow>
        <Footer>
          <FooterCheck />
          <SelectLabel>Select All</SelectLabel>
          <TextLink>Print Job Cards</TextLink>&nbsp;<Sep>|</Sep>&nbsp;<TextLink>Email Job Cards</TextLink>&nbsp;<Sep>|</Sep>&nbsp;<TextLink>Approve Job Cards</TextLink>
        </Footer>
        <MapBox>
          <StreetMap />
          <LayersTile><LayersIcon /></LayersTile>
          <FullTile><FullIcon /></FullTile>
          <LegendBox>
            <LegendInner>
              <LegendName>Job Site</LegendName>
              <LegendBadge>Site</LegendBadge>
              <svg width="12" height="12" viewBox="0 0 12 12" fill="none" stroke="#222" strokeWidth="1.6"><circle cx="5" cy="5" r="3.8" /><path d="M8 8 L11.5 11.5" /></svg>
              <LegendCheck><svg width="10" height="9" viewBox="0 0 10 9" fill="none" stroke="#fff" strokeWidth="2"><path d="M1 5 L4 8 L9 1" /></svg></LegendCheck>
            </LegendInner>
          </LegendBox>
          <ZoomTile><ZoomIn>+</ZoomIn><ZoomOut>−</ZoomOut></ZoomTile>
        </MapBox>
      </Main>
    </Page>
  );
}
